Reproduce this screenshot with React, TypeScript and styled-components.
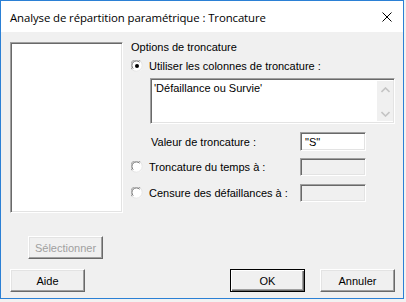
import styled, { createGlobalStyle, css } from 'styled-components';

const GlobalStyle = createGlobalStyle`
  html, body {
    margin: 0;
    padding: 0;
    background: #f2f2f2;
  }
  * {
    box-sizing: border-box;
  }
`;

const sunken = css`
  border: 1px solid;
  border-color: #a0a0a0 #ffffff #ffffff #a0a0a0;
  box-shadow:
    inset 1px 1px 0 #696969,
    inset -1px -1px 0 #e3e3e3;
`;

const raised = css`
  border: 1px solid;
  border-color: #ffffff #696969 #696969 #ffffff;
  box-shadow:
    inset -1px -1px 0 #a0a0a0,
    inset 1px 1px 0 #e3e3e3;
`;

const Radio = ({ checked }: { checked?: boolean }) => (
  <RadioIcon width="12" height="12" viewBox="0 0 12 12">
    <circle cx="6" cy="6" r="5.5" fill="#ffffff" />
    <path d="M1.2 9.5 A5.3 5.3 0 0 1 9.5 1.2" fill="none" stroke="#a0a0a0" strokeWidth="1" />
    <path d="M2.2 8.6 A4.2 4.2 0 0 1 8.6 2.2" fill="none" stroke="#696969" strokeWidth="1" />
    <path d="M9.5 1.2 A5.3 5.3 0 0 1 1.2 9.5" fill="none" stroke="#e3e3e3" strokeWidth="1" />
    {checked && <circle cx="6" cy="6" r="2" fill="#000000" />}
  </RadioIcon>
);

const App = () => {
  return (
    <>
      <GlobalStyle />
      <Window>
        <TitleBar>
          <Title>Analyse de répartition paramétrique : Troncature</Title>
          <CloseIcon width="10" height="10" viewBox="0 0 10 10">
            <path d="M0.5 0.5 L9.5 9.5 M9.5 0.5 L0.5 9.5" stroke="#000" strokeWidth="1" />
          </CloseIcon>
        </TitleBar>

        <Body>
          <Main>
            <LeftCol>
              <ListBox />
              <SelectButton disabled>Sélectionner</SelectButton>
            </LeftCol>

            <RightCol>
              <GroupLabel>Options de troncature</GroupLabel>
              <RadioRow>
                <Radio checked />
                <span>Utiliser les colonnes de troncature :</span>
              </RadioRow>
              <ColumnsBox>
                <ColumnsText>'Défaillance ou Survie'</ColumnsText>
                <ScrollTrack>
                  <svg width="9" height="6" viewBox="0 0 9 6">
                    <path d="M0.5 5 L4.5 1 L8.5 5" fill="none" stroke="#c4c4c4" strokeWidth="1.6" />
                  </svg>
                  <svg width="9" height="6" viewBox="0 0 9 6">
                    <path d="M0.5 1 L4.5 5 L8.5 1" fill="none" stroke="#c4c4c4" strokeWidth="1.6" />
                  </svg>
                </ScrollTrack>
              </ColumnsBox>

              <FieldRow $gap={8} $height={19}>
                <ValueLabel>Valeur de troncature :</ValueLabel>
                <Field>"S"</Field>
              </FieldRow>
              <FieldRow $gap={7} $height={18}>
                <RadioRow>
                  <Radio />
                  <span>Troncature du temps à :</span>
                </RadioRow>
                <Field $disabled />
              </FieldRow>
              <FieldRow $gap={8} $height={18}>
                <RadioRow>
                  <Radio />
                  <span>Censure des défaillances à :</span>
                </RadioRow>
                <Field $disabled />
              </FieldRow>
            </RightCol>
          </Main>

          <Footer>
            <Button>Aide</Button>
            <ButtonGroup>
              <Button $default>OK</Button>
              <Button>Annuler</Button>
            </ButtonGroup>
          </Footer>
        </Body>
      </Window>
    </>
  );
};

export default App;

const Window = styled.div`
  width: 404px;
  height: 299px;
  border: 1px solid #2b80d5;
  background: #f0f0f0;
  display: flex;
  flex-direction: column;
  font-family: 'Liberation Sans', Arial, sans-serif;
  font-size: 11px;
  color: #000000;
`;

const TitleBar = styled.div`
  height: 31px;
  flex: none;
  background: #ffffff;
  display: flex;
  align-items: center;
  justify-content: space-between;
  padding: 1px 11px 0 9px;
`;

const Title = styled.span`
  font-family: 'Open Sans', 'Noto Sans', sans-serif;
  font-size: 11.4px;
  letter-spacing: -0.1px;
  color: #000000;
`;

const CloseIcon = styled.svg`
  display: block;
`;

const Body = styled.div`
  flex: 1;
  display: flex;
  flex-direction: column;
  padding: 10px 8px 0 9px;
`;

const Main = styled.div`
  display: flex;
  gap: 8px;
`;

const LeftCol = styled.div`
  width: 113px;
  display: flex;
  flex-direction: column;
`;

const ListBox = styled.div`
  ${sunken};
  height: 171px;
  background: #ffffff;
`;

const Button = styled.button<{ $default?: boolean }>`
  ${raised};
  width: 75px;
  height: 23px;
  padding: 0;
  background: #f0f0f0;
  font-family: 'Liberation Sans', Arial, sans-serif;
  font-size: 11px;
  color: #000000;
  ${(p) =>
    p.$default &&
    css`
      border: 1px solid #000000;
      box-shadow:
        inset 1px 1px 0 #ffffff,
        inset -1px -1px 0 #696969,
        inset -2px -2px 0 #a0a0a0;
    `}
`;

const SelectButton = styled(Button)`
  margin: 23px 0 0 18px;
  color: #a0a0a0;
`;

const RightCol = styled.div`
  flex: 1;
  display: flex;
  flex-direction: column;
`;

const GroupLabel = styled.div`
  height: 11px;
  line-height: 11px;
`;

const RadioRow = styled.div`
  display: flex;
  align-items: center;
  gap: 6px;
  height: 14px;
  line-height: 14px;
  white-space: nowrap;

  ${GroupLabel} + & {
    margin-top: 6px;
  }
`;

const RadioIcon = styled.svg`
  display: block;
  flex: none;
`;

const ColumnsBox = styled.div`
  ${sunken};
  margin: 5px 0 0 19px;
  height: 46px;
  background: #ffffff;
  display: flex;
`;

const ColumnsText = styled.div`
  flex: 1;
  padding: 3px 0 0 3px;
`;

const ScrollTrack = styled.div`
  width: 16px;
  margin: 2px 1px 2px 0;
  background: #f0f0f0;
  display: flex;
  flex-direction: column;
  align-items: center;
  justify-content: space-between;
  padding: 6px 0 4px;
`;

const FieldRow = styled.div<{ $gap: number; $height: number }>`
  margin-top: ${(p) => p.$gap}px;
  height: ${(p) => p.$height}px;
  display: grid;
  grid-template-columns: 169px 66px;
  align-items: center;
`;

const ValueLabel = styled.span`
  padding-left: 20px;
`;

const Field = styled.div<{ $disabled?: boolean }>`
  ${sunken};
  height: 100%;
  background: ${(p) => (p.$disabled ? '#f0f0f0' : '#ffffff')};
  padding: 2px 0 0 4px;
  line-height: 14px;
`;

const Footer = styled.div`
  margin-top: 10px;
  display: flex;
  justify-content: space-between;
`;

const ButtonGroup = styled.div`
  display: flex;
  gap: 15px;
`;
